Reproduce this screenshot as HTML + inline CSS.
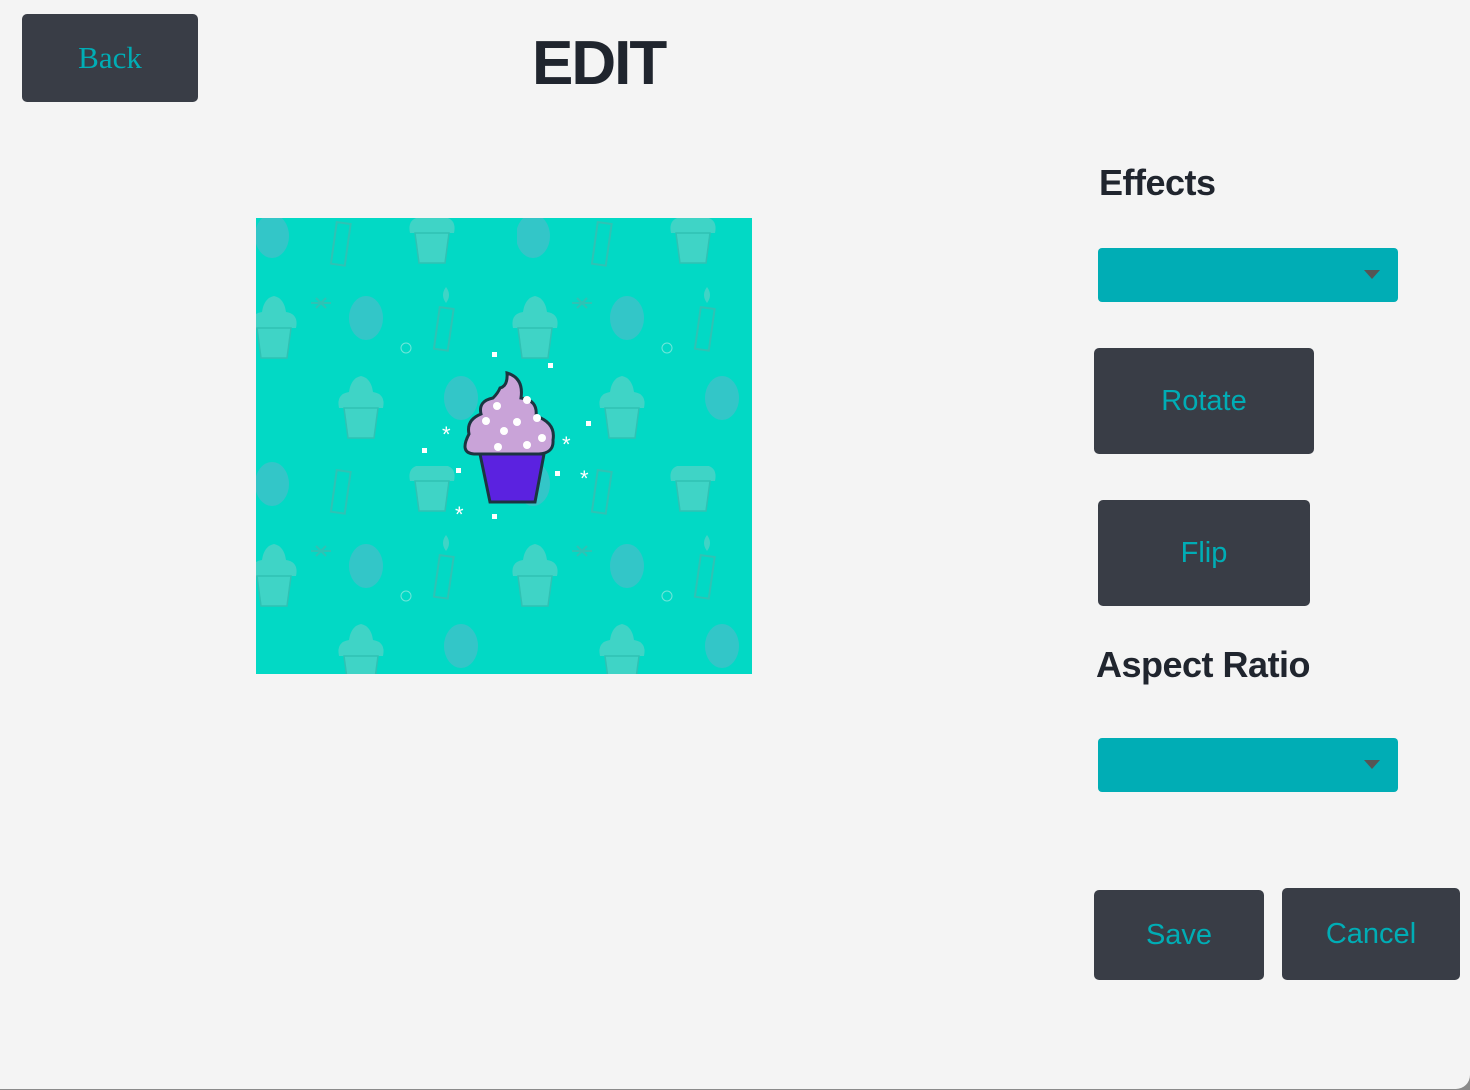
<!DOCTYPE html>
<html><head><meta charset="utf-8"><style>
html,body{margin:0;padding:0;background:#8a8a8a;}
body{width:1470px;height:1090px;position:relative;overflow:hidden;font-family:"Liberation Sans",sans-serif;}
.page{position:absolute;left:0;top:0;width:1470px;height:1089px;background:#f4f4f4;border-bottom-right-radius:14px;}
.btn{position:absolute;background:#393d46;border-radius:5px;color:#00adb5;display:flex;align-items:center;justify-content:center;font-size:29px;}
.sel{position:absolute;background:#00adb5;border-radius:4px;width:300px;height:54px;left:1098px;}
.sel:after{content:"";position:absolute;right:18px;top:22px;border-left:8px solid transparent;border-right:8px solid transparent;border-top:9px solid #555;}
h{position:absolute;font-weight:bold;color:#20252e;}
.back{font-family:"Liberation Serif",serif;font-size:31px;}
</style></head><body><div class="page"></div>
<div class="btn back" style="left:22px;top:14px;width:176px;height:88px;">Back</div>
<h style="left:532px;top:28px;font-size:62px;letter-spacing:-2px;">EDIT</h>
<h style="left:1099px;top:162px;font-size:36px;letter-spacing:-0.5px;">Effects</h>
<div class="sel" style="top:248px;"></div>
<div class="btn" style="left:1094px;top:348px;width:220px;height:106px;">Rotate</div>
<div class="btn" style="left:1098px;top:500px;width:212px;height:106px;">Flip</div>
<h style="left:1096px;top:644px;font-size:36px;letter-spacing:-0.5px;">Aspect Ratio</h>
<div class="sel" style="top:738px;"></div>
<div class="btn" style="left:1094px;top:890px;width:170px;height:90px;">Save</div>
<div class="btn" style="left:1282px;top:888px;width:178px;height:92px;">Cancel</div>
<svg style="position:absolute;left:256px;top:218px" width="496" height="456" viewBox="0 0 496 456">
<defs>
<g id="cc" fill="#3fd4c6" stroke="#2fc2b4" stroke-width="1.5"><path d="M-22 0 Q-25-14-12-16 Q-10-30 0-32 Q10-30 12-16 Q25-14 22 0Z" stroke="none"/><path d="M-17 0 L-13 30 L13 30 L17 0Z"/></g>
<g id="bl"><ellipse cx="0" cy="0" rx="17" ry="22" fill="#33c6c8"/></g>
<g id="cd" fill="none" stroke="#2fc2b4" stroke-width="2"><rect x="-7" y="-5" width="14" height="42" transform="rotate(8)"/><path d="M0-10 q-6-8 0-16 q6 8 0 16z" fill="#3fd4c6" stroke="none"/></g>
<pattern id="p" width="261" height="248" patternUnits="userSpaceOnUse">
<rect width="261" height="248" fill="#02d9c5"/>
<use href="#bl" x="16" y="18"/><use href="#bl" x="16" y="266"/>
<use href="#cd" x="87" y="10"/>
<use href="#cc" x="176" y="15"/>
<use href="#cc" x="18" y="110"/>
<use href="#bl" x="110" y="100"/>
<use href="#cd" x="190" y="95"/>
<use href="#cc" x="105" y="190"/>
<use href="#bl" x="205" y="180"/>
<use href="#cc" x="279" y="110"/>
<path d="M60 80 l10 10 M60 90 l10-10 M55 85h20" stroke="#2fc2b4" stroke-width="2"/>
<circle cx="150" cy="130" r="5" fill="none" stroke="#6fe6da"/>
</pattern>
</defs>
<rect width="496" height="456" fill="url(#p)"/>
<g>
<path d="M251 155 Q268 160 265 180 Q282 182 280 198 Q300 205 297 222 Q298 235 283 236 L218 236 Q203 235 213 216 Q210 202 225 196 Q222 183 237 180 Q242 175 244 170 Q252 168 251 155Z" fill="#c9a3d8" stroke="#1c3440" stroke-width="3"/>
<path d="M224 236 L234 284 L279 284 L288 236Z" fill="#5b22e0" stroke="#1c3440" stroke-width="3"/>
<g fill="#fff"><circle cx="241" cy="188" r="4"/><circle cx="271" cy="182" r="4"/><circle cx="230" cy="203" r="4"/><circle cx="261" cy="204" r="4"/><circle cx="281" cy="200" r="4"/><circle cx="248" cy="213" r="4"/><circle cx="286" cy="220" r="4"/><circle cx="242" cy="229" r="4"/><circle cx="271" cy="227" r="4"/></g>
<g fill="#fff"><rect x="236" y="134" width="5" height="5"/><rect x="292" y="145" width="5" height="5"/><rect x="330" y="203" width="5" height="5"/><rect x="166" y="230" width="5" height="5"/><rect x="200" y="250" width="5" height="5"/><rect x="299" y="253" width="5" height="5"/><rect x="236" y="296" width="5" height="5"/></g>
<g fill="#fff" font-size="22" font-family="Liberation Sans">
<text x="186" y="224">*</text><text x="306" y="234">*</text><text x="324" y="268">*</text><text x="199" y="304">*</text></g>
</g>
</svg>
</body></html>
